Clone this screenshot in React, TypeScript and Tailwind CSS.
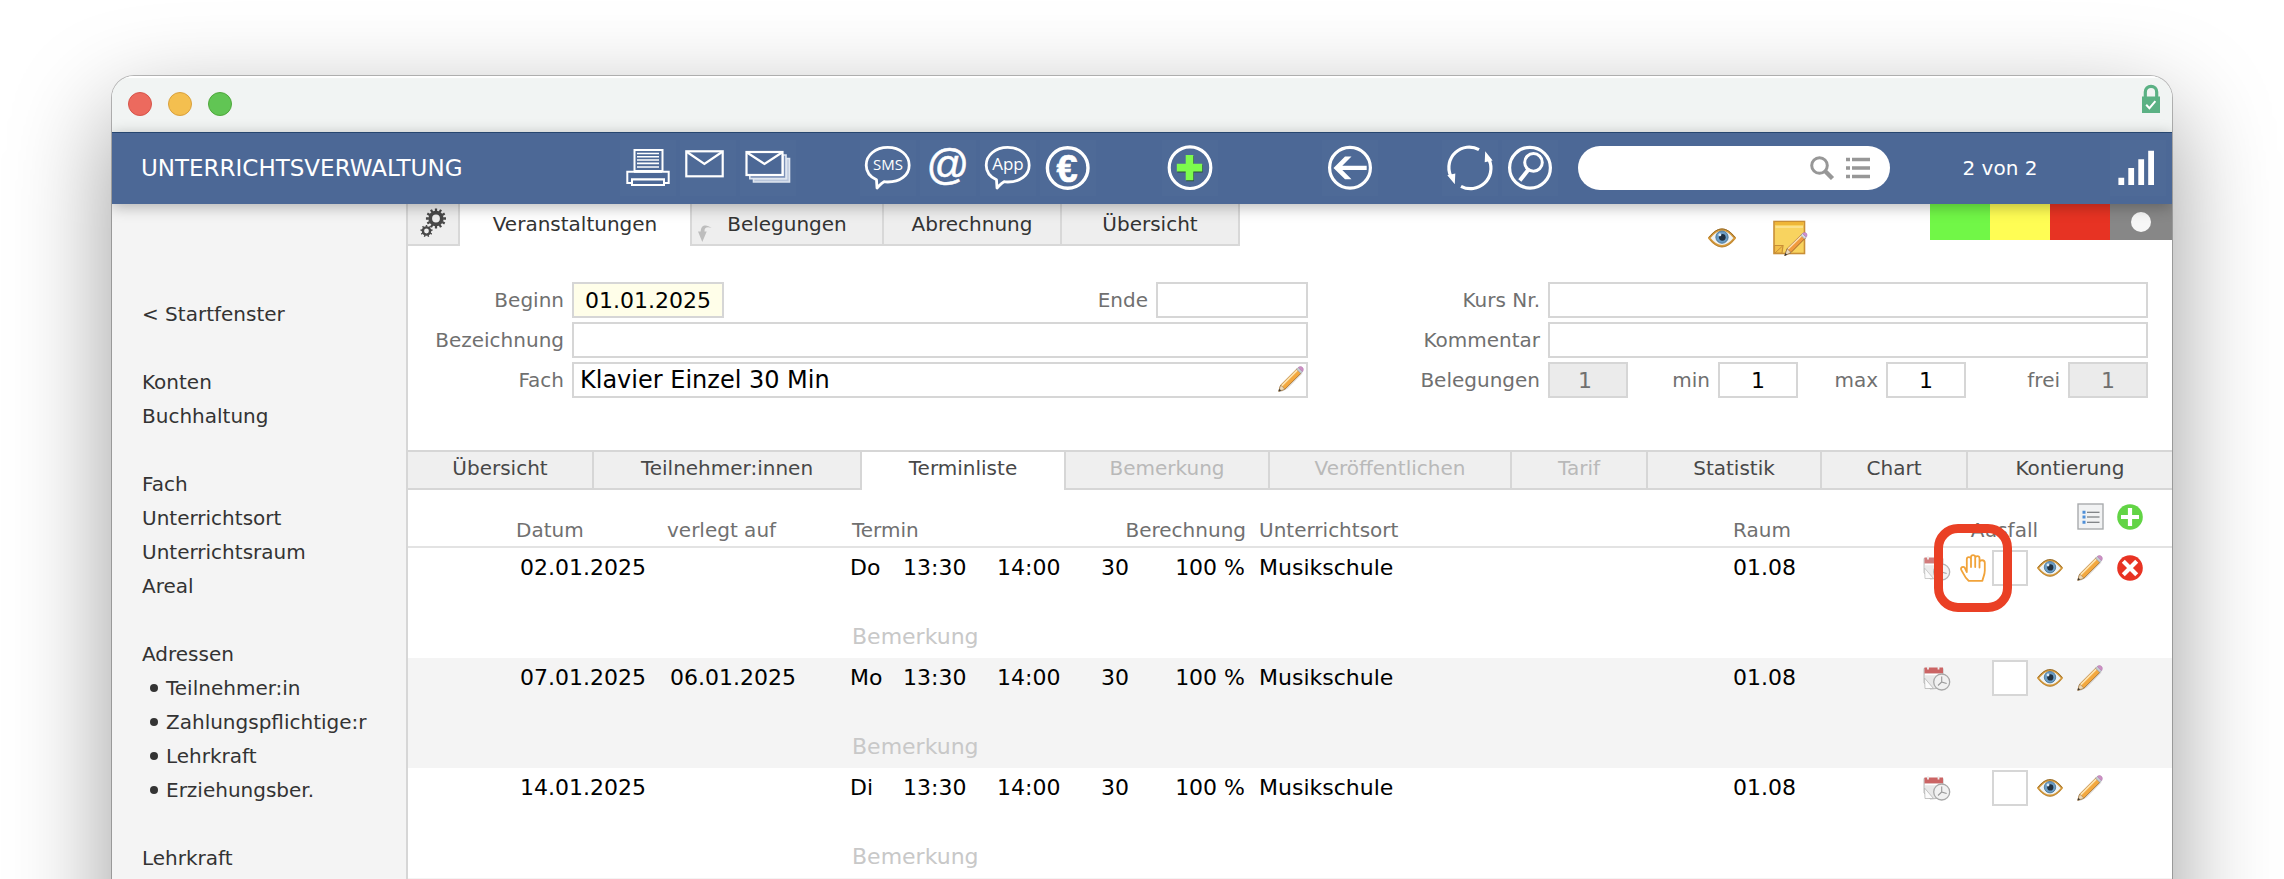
import React from "react";

type IconProps = { className?: string };

const NavIcon = ({ label, children }: { label: string; children: React.ReactNode }) => (
  <button type="button" aria-label={label} className="h-14 w-14 shrink-0 bg-white/[0.015]">
    <svg viewBox="0 0 56 56" className="h-14 w-14" fill="none" stroke="#fff" strokeWidth="2">
      {children}
    </svg>
  </button>
);

const PrinterIcon = () => (
  <NavIcon label="Drucken">
    <rect x="14.5" y="10" width="28" height="21" />
    <path d="M17 13.5h22M17 16.8h22M17 20h22M17 23.4h22M17 27h22" strokeWidth="1.6" />
    <path d="M14 31.7H7.3V43H12v-3.5h32V43h4.7V31.7H42z" fill="#4c6896" />
    <path d="M14 31.7h28" />
    <rect x="12" y="39.5" width="32" height="5.5" fill="#4c6896" />
  </NavIcon>
);

const EnvelopeIcon = () => (
  <NavIcon label="Brief">
    <rect x="6.3" y="11.3" width="36.4" height="25" strokeWidth="2.2" />
    <path d="M7 12l17.4 12L42 12" strokeWidth="2.2" />
  </NavIcon>
);

const EnvelopeStackIcon = () => (
  <NavIcon label="Serienbrief">
    <g stroke="#dfe6f0">
      <path d="M13.5 39v3h36V18.5h-3v20H13.5" fill="#b9c6dc" strokeWidth="1.6" />
      <path d="M9.8 36v2.6h36.2V15h-3v21" fill="#7d92b8" strokeWidth="1.6" />
    </g>
    <rect x="6.5" y="12" width="36" height="23" fill="#4c6896" strokeWidth="2.2" />
    <path d="M7 12.5l17.5 11.5L42 12.5" strokeWidth="2.2" />
  </NavIcon>
);

const Bubble = ({ label, text, size }: { label: string; text: string; size: number }) => (
  <NavIcon label={label}>
    <path
      d="M16.5 39.8C9.5 36.5 6.2 31 6.2 25.2C6.2 15 15.5 7.4 27.7 7.4S49.2 15 49.2 25.2S40 42 27.7 42c-1.5 0-2.6 0-3.7-.3c-3 1.5-4.8 4-7 6.3z"
      strokeWidth="2.8"
      strokeLinejoin="round"
    />
    <text
      x="28"
      y="29.5"
      textAnchor="middle"
      fill="#fff"
      stroke="none"
      fontSize={size}
      fontFamily="'Open Sans', sans-serif"
    >
      {text}
    </text>
  </NavIcon>
);

const AtIcon = () => (
  <NavIcon label="E-Mail">
    <text
      x="27.8"
      y="39"
      textAnchor="middle"
      fill="#fff"
      strokeWidth="0.6"
      fontSize="42"
      fontFamily="'Liberation Sans', sans-serif"
    >
      @
    </text>
  </NavIcon>
);

const EuroIcon = () => (
  <NavIcon label="Zahlungen">
    <circle cx="27.7" cy="28" r="20.3" strokeWidth="3.4" />
    <text
      x="27"
      y="41.5"
      textAnchor="middle"
      fill="#fff"
      strokeWidth="0.6"
      fontSize="38"
      fontWeight="700"
      fontFamily="'Liberation Sans', sans-serif"
    >
      €
    </text>
  </NavIcon>
);

const AddIcon = () => (
  <NavIcon label="Neu">
    <circle cx="28" cy="27.7" r="20.8" strokeWidth="3.2" />
    <path d="M24.2 16h7.6v8.8h8.9v7.6h-8.9v8.9h-7.6v-8.9h-8.9v-7.6h8.9z" fill="#2c4f3c" stroke="none" />
    <path d="M23.7 15h7.6v8.8h8.9v7.6h-8.9v8.9h-7.6v-8.9h-8.9v-7.6h8.9z" fill="#7dfb4d" stroke="none" />
  </NavIcon>
);

const BackIcon = () => (
  <NavIcon label="Zurück">
    <circle cx="28" cy="27.7" r="20.4" strokeWidth="3.2" />
    <path d="M11.5 27.9L23 16.5h6.5L20.3 25.8H44.7v4.3H20.3l9.2 9.2H23z" fill="#fff" stroke="none" />
  </NavIcon>
);

const RefreshIcon = () => (
  <NavIcon label="Aktualisieren">
    <path d="M37 9.6A20.4 20.4 0 0 0 8.5 35.5" strokeWidth="3.2" />
    <path d="M19 46.3A20.4 20.4 0 0 0 47.2 20" strokeWidth="3.2" />
    <path d="M43.2 11.3l7.4 9.3-7.9 1.6zM12.8 44.3L5.3 35.3l8-1.9z" fill="#fff" stroke="none" />
  </NavIcon>
);

const FindIcon = () => (
  <NavIcon label="Suchen">
    <circle cx="28" cy="27.7" r="20.4" strokeWidth="3.2" />
    <circle cx="31.5" cy="22.4" r="8.8" strokeWidth="3" />
    <path d="M26.5 29.5l-8.7 11" strokeWidth="4" />
  </NavIcon>
);

const SignalIcon = () => (
  <NavIcon label="Statistik">
    <path
      d="M8.4 37.7h5.8V45H8.4zM18.3 28h5.8v17h-5.8zM28.3 19.3h5.8V45h-5.8zM38.2 10.7H44V45h-5.8z"
      fill="#fff"
      stroke="none"
    />
  </NavIcon>
);

const EyeIcon = ({ className = "h-5 w-[26px]" }: IconProps) => (
  <svg viewBox="0 0 26 20" className={className}>
    <path d="M1 10C5 5 8.5 2.2 13 2.2S21 5 25 10c-4 5-7.500 7.600-12 7.600S5 15 1 10z" fill="#eef3f5" stroke="#d99b3a" strokeWidth="2" />
    <path d="M1 9.500C5 4.500 8.500 1.600 13 1.600s8 2.900 12 7.900" fill="none" stroke="#8b6428" strokeWidth="0.9" />
    <path d="M2 11.500c3.500 4 6.500 6.800 11 6.800s7.500-2.800 11-6.800" fill="none" stroke="#a47733" strokeWidth="0.7" />
    <circle cx="13" cy="9.2" r="5.7" fill="#6b9cc4" stroke="#44708f" strokeWidth="0.8" />
    <circle cx="13.3" cy="9.4" r="3.1" fill="#20303f" />
    <circle cx="11" cy="7" r="1.4" fill="#dcebf6" />
  </svg>
);

const PencilIcon = ({ className = "h-[26px] w-[26px]" }: IconProps) => (
  <svg viewBox="0 0 26 26" className={className}>
    <path d="M1.5 26l8-4L24 7" fill="none" stroke="#000" strokeOpacity="0.12" strokeWidth="1.5" />
    <path d="M.8 25.200L2.600 19.200 18.800 3l4.200 4.200L6.800 23.300z" fill="#f3a83f" stroke="#a8702c" strokeWidth="0.9" />
    <path d="M3.600 19.800L19.200 4.200" stroke="#fde3ae" strokeWidth="1.8" />
    <path d="M.8 25.200l1.800-6 2.200 1.700 2 2.400z" fill="#eed9b8" stroke="#8f7650" strokeWidth="0.5" />
    <path d="M.5 25.500l.9-2.700 1.800 1.800z" fill="#3d3a35" />
    <path d="M18.600 3.200l1.700-1.700 4.200 4.200-1.700 1.700z" fill="#c9ced6" stroke="#8a8f98" strokeWidth="0.5" />
    <path d="M20.300 1.500C21.500.3 23.200.2 24.400 1.300s1.300 3 .1 4.400z" fill="#cf8fc6" stroke="#a878a8" strokeWidth="0.5" />
  </svg>
);

const NoteIcon = () => (
  <svg viewBox="0 0 36 36" className="h-9 w-9">
    <rect x="2" y="1.5" width="30.5" height="32" fill="#f8d35f" stroke="#c98f36" strokeWidth="1.6" />
    <path d="M3 3.500h28.500" stroke="#efb637" strokeWidth="3" />
    <path d="M3.500 7h27.500" stroke="#fdeeb5" strokeWidth="1.2" />
    <path d="M2.500 25.500h8.500l-1 7.500H2.500z" fill="#f3c04a" stroke="#c98f36" strokeWidth="1.2" />
    <path d="M3 33l7.500-7" stroke="#c98f36" strokeWidth="1" />
    <path d="M12.800 35.500l2.300-6.800L29.500 14.500l3.700 3.700L19 32.500z" fill="#f19a3e" stroke="#96602a" strokeWidth="0.9" />
    <path d="M16 29l14-13.800" stroke="#fde0b0" strokeWidth="1.6" />
    <path d="M12.800 35.500l2.300-6.800 3.900 3.800z" fill="#ecd9bd" stroke="#7d6a4c" strokeWidth="0.5" />
    <path d="M12.500 35.800l1-2.700 1.700 1.600z" fill="#333" />
    <path d="M28.800 15.200l1.800-1.800 3.700 3.700-1.800 1.800z" fill="#d5dae2" stroke="#8c929c" strokeWidth="0.5" />
    <path d="M30.600 13.400c1.300-1.300 2.600-1.300 3.600-.3s1.200 2.600.1 4z" fill="#cf8fd4" stroke="#a67aae" strokeWidth="0.5" />
  </svg>
);

const CalendarClockIcon = ({ dim }: { dim?: boolean }) => (
  <svg viewBox="0 0 28 25" className={dim ? "h-[25px] w-7 opacity-85" : "h-[25px] w-7"}>
    <path d="M1 2.500h19V22l-13 1L1 17z" fill="#e8e8e8" stroke="#b5b5b5" strokeWidth="0.9" />
    <rect x="1.500" y="1.500" width="18.500" height="6" fill="#cb6464" />
    <path d="M5 0v3.500M15.500 0v3.500" stroke="#f0f0f0" strokeWidth="1.8" />
    <path d="M2 8.500h17.500" stroke="#fff" strokeWidth="1.5" />
    <path d="M1.500 12l9 10.500H2z" fill="#fbfbfb" stroke="#b5b5b5" strokeWidth="0.8" />
    <circle cx="18.7" cy="16" r="8" fill="#f1f1f1" stroke="#a8a8a8" strokeWidth="1.3" />
    <path d="M18.700 10.500V16l5 1.500M18.700 16l-3.700 3.500" fill="none" stroke="#9a9a9a" strokeWidth="1.1" />
  </svg>
);

const HandIcon = () => (
  <svg viewBox="0 0 26 28" className="h-7 w-[26px]" fill="none" stroke="#f1a33a" strokeWidth="1.8" strokeLinecap="round" strokeLinejoin="round">
    <path d="M6.800 18V5.300a2.100 2.100 0 0 1 4.200 0V13M11 5V3.200a2.100 2.100 0 0 1 4.200 0V13M15.200 4.200a2.100 2.100 0 0 1 4.300 0V13.500M19.500 8.200c.4-2.600 5.200-2.800 5.300.6V16.500c0 4.500-1.600 6-2.400 10.300H8.600C4.800 23.500 3.200 19.300 1.200 15.600c-.8-2.200 2-3.700 3.500-1.900L6.800 18" />
  </svg>
);

const ListIcon = () => (
  <svg viewBox="0 0 27 27" className="h-[27px] w-[27px]">
    <rect x="1" y="1" width="25" height="25" fill="#f1f2f3" stroke="#a9abad" strokeWidth="1.4" />
    <path d="M10 9.200h12.500M10 14h12.500M10 19.200h12.500" stroke="#5e6266" strokeWidth="1.1" />
    <path d="M5.500 7.700h3v3h-3zM5.500 12.600h3v3h-3zM5.500 17.700h3v3h-3z" fill="#4f8fd8" />
  </svg>
);

const PlusCircleIcon = () => (
  <svg viewBox="0 0 26 26" className="h-[26px] w-[26px]">
    <circle cx="13" cy="13" r="12.8" fill="#62d445" />
    <path d="M13 4v18M4 13h18" stroke="#fff" strokeWidth="4.2" />
  </svg>
);

const DeleteCircleIcon = () => (
  <svg viewBox="0 0 26 26" className="h-[26px] w-[26px]">
    <circle cx="13" cy="13" r="12.8" fill="#e83323" />
    <path d="M6.300 6.300l13.400 13.400M19.700 6.300L6.300 19.700" stroke="#fff" strokeWidth="4.2" />
  </svg>
);

const Gear = ({ cx, cy, r, teeth, w }: { cx: number; cy: number; r: number; teeth: number; w: number }) => (
  <g stroke="#484848" fill="none">
    <circle cx={cx} cy={cy} r={r} strokeWidth={w} />
    {Array.from({ length: teeth }, (_, i) => (
      <path
        key={i}
        d={`M${cx} ${cy - r - w / 2 + 0.5}v${-w * 0.75}`}
        strokeWidth={w * 0.6}
        transform={`rotate(${(360 / teeth) * i} ${cx} ${cy})`}
      />
    ))}
  </g>
);

const GearsIcon = () => (
  <svg viewBox="0 0 26 30" className="h-[30px] w-[26px]">
    <Gear cx={16} cy={10.5} r={5.8} teeth={12} w={3.8} />
    <Gear cx={6.5} cy={23} r={3.6} teeth={9} w={2.4} />
  </svg>
);

const CurvedArrowIcon = () => (
  <svg viewBox="0 0 14 18" className="h-[18px] w-3.5">
    <path d="M13.500 4C9 .5 3 0 2.700 7.500H0L4.300 18 8.700 7.500H6.500C6.300 3.500 9 2.500 13.500 4z" fill="#bdbdbd" />
  </svg>
);

const LockIcon = () => (
  <svg viewBox="0 0 18 29" className="h-[29px] w-[18px]">
    <path d="M3.300 14V8a5.700 5.700 0 0 1 11.400 0v6" fill="none" stroke="#5bb184" strokeWidth="3.2" />
    <path d="M0 12.500h18V29H0z" fill="#5bb184" />
    <path d="M4.200 20.800l3.200 3.400 6-7" fill="none" stroke="#fff" strokeWidth="2" />
  </svg>
);

const sidebar: { text: string; bullet?: boolean }[] = [
  { text: "< Startfenster" },
  { text: "" },
  { text: "Konten" },
  { text: "Buchhaltung" },
  { text: "" },
  { text: "Fach" },
  { text: "Unterrichtsort" },
  { text: "Unterrichtsraum" },
  { text: "Areal" },
  { text: "" },
  { text: "Adressen" },
  { text: "Teilnehmer:in", bullet: true },
  { text: "Zahlungspflichtige:r", bullet: true },
  { text: "Lehrkraft", bullet: true },
  { text: "Erziehungsber.", bullet: true },
  { text: "" },
  { text: "Lehrkraft" },
];

const subTabs = [
  { text: "Übersicht" },
  { text: "Teilnehmer:innen" },
  { text: "Terminliste", active: true },
  { text: "Bemerkung", disabled: true },
  { text: "Veröffentlichen", disabled: true },
  { text: "Tarif", disabled: true },
  { text: "Statistik" },
  { text: "Chart" },
  { text: "Kontierung" },
];

const rows = [
  { date: "02.01.2025", moved: "", day: "Do", first: true },
  { date: "07.01.2025", moved: "06.01.2025", day: "Mo" },
  { date: "14.01.2025", moved: "", day: "Di" },
];

const field = "h-9 min-w-0 border-2 border-[#d6d6d6] bg-white text-[22px] leading-8 text-black outline-none";
const label = "shrink-0 text-right text-[20px] leading-9 text-[#707070]";
const topTab = "h-[42px] border-b-2 border-r-2 border-[#d8d8d8] bg-[#eeeeee] text-center text-[#333]";

function NavBar() {
  return (
    <nav className="relative z-10 flex h-[72px] shrink-0 items-center bg-[#4c6896] pl-[29px] pr-1.5 text-white shadow-[inset_0_1px_0_#27466f,0_3px_14px_rgba(0,0,0,0.28)]">
      <h1 className="w-[479px] shrink-0 text-[23px]">UNTERRICHTSVERWALTUNG</h1>
      <div className="flex gap-1">
        <PrinterIcon />
        <EnvelopeIcon />
        <EnvelopeStackIcon />
      </div>
      <div className="ml-16 flex gap-1">
        <Bubble label="SMS" text="SMS" size={15} />
        <AtIcon />
        <Bubble label="App" text="App" size={17} />
        <EuroIcon />
      </div>
      <div className="ml-[66px] flex">
        <AddIcon />
      </div>
      <div className="ml-[104px] flex">
        <BackIcon />
      </div>
      <div className="ml-16 flex gap-1">
        <RefreshIcon />
        <FindIcon />
      </div>
      <div className="ml-5 flex h-11 w-[312px] shrink-0 items-center rounded-full bg-white pl-5 pr-5">
        <input aria-label="Suche" className="h-9 min-w-0 flex-1 bg-transparent text-[20px] text-black outline-none" />
        <svg viewBox="0 0 60 24" className="h-6 w-[60px]" fill="none" stroke="#979797">
          <circle cx="9.5" cy="9.5" r="7.8" strokeWidth="3" />
          <path d="M15 15l7.500 7.500" strokeWidth="4.4" />
          <path d="M36 3.500h4M36 12h4M36 20.500h4M42 3.500h18M42 12h18M42 20.500h18" strokeWidth="3.4" />
        </svg>
      </div>
      <span className="flex-1 text-center text-[20px]">2 von 2</span>
      <SignalIcon />
    </nav>
  );
}

function TopTabs() {
  return (
    <div className="flex h-[52px] items-start text-[20px] leading-10">
      <button type="button" aria-label="Einstellungen" className={`${topTab} flex w-[52px] shrink-0 justify-center pt-1`}>
        <GearsIcon />
      </button>
      <button type="button" className="h-10 w-[230px] shrink-0 bg-white text-center text-[#333]">
        Veranstaltungen
      </button>
      <button type="button" className={`${topTab} relative w-[194px] shrink-0 border-l-2`}>
        <span className="absolute bottom-0.5 left-1.5 leading-none">
          <CurvedArrowIcon />
        </span>
        Belegungen
      </button>
      <button type="button" className={`${topTab} w-[178px] shrink-0`}>
        Abrechnung
      </button>
      <button type="button" className={`${topTab} w-[178px] shrink-0`}>
        Übersicht
      </button>
      <div className="ml-auto mr-[122px] flex items-center gap-9 pt-4">
        <button type="button" aria-label="Ansehen">
          <EyeIcon className="h-[22px] w-7" />
        </button>
        <button type="button" aria-label="Notiz">
          <NoteIcon />
        </button>
      </div>
      <div className="flex h-9 shrink-0">
        <button type="button" aria-label="Grün" className="w-[60px] bg-[#71f747]" />
        <button type="button" aria-label="Gelb" className="w-[60px] bg-[#fffd54]" />
        <button type="button" aria-label="Rot" className="w-[60px] bg-[#e73323]" />
        <button type="button" aria-label="Ohne Farbe" className="flex w-[62px] items-center justify-center bg-[#878787]">
          <span className="h-5 w-5 rounded-full bg-[#f7f7f7]" />
        </button>
      </div>
    </div>
  );
}

function CourseForm() {
  return (
    <form className="grid grid-cols-[900fr_840fr] pr-6 pt-[26px]">
      <div className="flex flex-col gap-1">
        <div className="flex gap-2">
          <label htmlFor="beginn" className={`${label} w-[156px]`}>Beginn</label>
          <input id="beginn" defaultValue="01.01.2025" className="h-9 w-[152px] border-2 border-[#d6d6d6] bg-[#fffee9] text-center text-[22px] leading-8 text-black outline-none" />
          <label htmlFor="ende" className={`${label} flex-1`}>Ende</label>
          <input id="ende" className={`${field} w-[152px]`} />
        </div>
        <div className="flex gap-2">
          <label htmlFor="bezeichnung" className={`${label} w-[156px]`}>Bezeichnung</label>
          <input id="bezeichnung" className={`${field} flex-1 px-1.5`} />
        </div>
        <div className="flex gap-2">
          <label htmlFor="fach" className={`${label} w-[156px]`}>Fach</label>
          <div className="relative flex flex-1">
            <input id="fach" defaultValue="Klavier Einzel 30 Min" className="h-9 min-w-0 flex-1 border-2 border-[#d6d6d6] bg-white px-1.5 text-[24px] leading-8 text-black outline-none" />
            <button type="button" aria-label="Fach bearbeiten" className="absolute right-1 top-1">
              <PencilIcon />
            </button>
          </div>
        </div>
      </div>
      <div className="flex flex-col gap-1">
        <div className="flex gap-2">
          <label htmlFor="kursnr" className={`${label} w-[232px]`}>Kurs Nr.</label>
          <input id="kursnr" className={`${field} flex-1 px-1.5`} />
        </div>
        <div className="flex gap-2">
          <label htmlFor="kommentar" className={`${label} w-[232px]`}>Kommentar</label>
          <input id="kommentar" className={`${field} flex-1 px-1.5`} />
        </div>
        <div className="flex gap-2">
          <label htmlFor="belegungen" className={`${label} w-[232px]`}>Belegungen</label>
          <input id="belegungen" readOnly defaultValue="1" className="h-9 w-20 border-2 border-[#d6d6d6] bg-[#ebebeb] pr-1.5 text-center text-[22px] leading-8 text-[#707070] outline-none" />
          <label htmlFor="min" className={`${label} w-[74px]`}>min</label>
          <input id="min" defaultValue="1" className={`${field} w-20 text-center`} />
          <label htmlFor="max" className={`${label} w-[72px]`}>max</label>
          <input id="max" defaultValue="1" className={`${field} w-20 text-center`} />
          <label htmlFor="frei" className={`${label} flex-1`}>frei</label>
          <input id="frei" readOnly defaultValue="1" className="h-9 w-20 border-2 border-[#d6d6d6] bg-[#ebebeb] text-center text-[22px] leading-8 text-[#707070] outline-none" />
        </div>
      </div>
    </form>
  );
}

function SubTabs() {
  return (
    <div className="mt-[52px] grid grid-cols-[186fr_268fr_204fr_204fr_242fr_136fr_174fr_146fr_204fr] border-t-2 border-[#d6d6d6] text-[20px] leading-8">
      {subTabs.map((t, i) => (
        <button
          key={t.text}
          type="button"
          disabled={t.disabled}
          className={[
            "h-[38px] border-[#d6d6d6] text-center",
            i < subTabs.length - 1 ? "border-r-2" : "",
            t.active ? "bg-white pb-1.5" : "border-b-2 bg-[#efefef] pb-1",
            t.disabled ? "text-[#b9b9b9]" : "text-[#484848]",
          ].join(" ")}
        >
          {t.text}
        </button>
      ))}
    </div>
  );
}

const slots = "grid grid-cols-[38px_34px_40px_40px_40px_40px] items-center justify-items-center";

function DateTable() {
  const th = "h-[58px] border-b-2 border-[#e3e3e3] pb-1 align-bottom font-normal leading-6";
  return (
    <table className="w-full table-fixed border-separate border-spacing-0 text-left text-[22px] leading-7 text-black">
      <colgroup>
        <col className="w-[259px]" />
        <col className="w-[183px]" />
        <col className="w-[53px]" />
        <col className="w-[94px]" />
        <col className="w-[104px]" />
        <col className="w-[60px]" />
        <col className="w-[87px]" />
        <col />
        <col className="w-[185px]" />
        <col className="w-[254px]" />
      </colgroup>
      <thead className="text-[20px] text-[#707070]">
        <tr>
          <th className={`${th} pl-[108px]`}>Datum</th>
          <th className={th}>verlegt auf</th>
          <th className={`${th} pl-0.5`} colSpan={3}>Termin</th>
          <th className={`${th} pr-0.5 text-right`} colSpan={2}>Berechnung</th>
          <th className={`${th} pl-[11px]`}>Unterrichtsort</th>
          <th className={th}>Raum</th>
          <th className={th}>
            <div className="flex items-end justify-end pr-[22px]">
              <span className="mr-8">Ausfall</span>
              <button type="button" aria-label="Liste" className="flex w-10 justify-center pb-3">
                <ListIcon />
              </button>
              <button type="button" aria-label="Termin hinzufügen" className="flex w-10 justify-center pb-3">
                <PlusCircleIcon />
              </button>
            </div>
          </th>
        </tr>
      </thead>
      {rows.map((r) => (
        <tbody key={r.date} className="bg-[#f4f4f4] first-of-type:bg-white last-of-type:bg-white">
          <tr className="h-10">
            <td className="pl-[112px]">{r.date}</td>
            <td className="pl-[3px]">{r.moved}</td>
            <td>{r.day}</td>
            <td>13:30</td>
            <td>14:00</td>
            <td>30</td>
            <td className="pr-[3px] text-right">100 %</td>
            <td className="pl-[11px]">Musikschule</td>
            <td>01.08</td>
            <td>
              <div className={`${slots} h-10`}>
                <button type="button" aria-label="Termin verlegen">
                  <CalendarClockIcon dim={r.first} />
                </button>
                {r.first ? (
                  <button type="button" aria-label="Anmelden" className="relative">
                    <HandIcon />
                    <span className="absolute left-1/2 top-1/2 h-[88px] w-[78px] -translate-x-1/2 -translate-y-1/2 rounded-[24px] border-9 border-[#ea4025]" />
                  </button>
                ) : (
                  <span />
                )}
                <input
                  type="checkbox"
                  aria-label={`Ausfall ${r.date}`}
                  className="h-9 w-9 appearance-none border-2 border-[#d6d6d6] bg-white"
                />
                <button type="button" aria-label="Ansehen">
                  <EyeIcon />
                </button>
                <button type="button" aria-label="Bearbeiten">
                  <PencilIcon />
                </button>
                {r.first && (
                  <button type="button" aria-label="Löschen">
                    <DeleteCircleIcon />
                  </button>
                )}
              </div>
            </td>
          </tr>
          <tr className="h-[70px]">
            <td colSpan={2} />
            <td colSpan={8} className="pb-[7px] pl-0.5 align-bottom">
              <input
                aria-label={`Bemerkung ${r.date}`}
                placeholder="Bemerkung"
                className="block h-7 w-full bg-transparent outline-none placeholder:text-[#c8c8c8]"
              />
            </td>
          </tr>
        </tbody>
      ))}
    </table>
  );
}

export default function App() {
  return (
    <div className="flex h-screen flex-col overflow-hidden bg-white font-['DejaVu_Sans',sans-serif]">
      <div className="mx-28 -mb-40 mt-[76px] flex flex-1 flex-col overflow-hidden rounded-[22px] bg-white shadow-[0_0_0_1px_rgba(0,0,0,0.25),0_36px_100px_rgba(0,0,0,0.4)]">
        <header className="flex h-14 shrink-0 items-center gap-4 bg-[#f1f4f3] pl-4 pr-3 shadow-[inset_0_2px_1px_#fff]">
          <button type="button" aria-label="Schließen" className="h-6 w-6 rounded-full border border-[#d6544a] bg-[#ec6a5e]" />
          <button type="button" aria-label="Minimieren" className="h-6 w-6 rounded-full border border-[#d9a03d] bg-[#f4bf4f]" />
          <button type="button" aria-label="Maximieren" className="h-6 w-6 rounded-full border border-[#4fa73c] bg-[#61c554]" />
          <span className="ml-auto -mt-3">
            <LockIcon />
          </span>
        </header>
        <NavBar />
        <div className="flex flex-1">
          <aside className="w-[296px] shrink-0 border-r-2 border-[#d6d6d6] bg-[#f4f4f4] pl-[30px] pt-[93px]">
            <ul className="text-[20px] leading-[34px] text-[#333]">
              {sidebar.map((item, i) => (
                <li key={i} className="h-[34px] whitespace-nowrap">
                  {item.text && (
                    <a href="#" className={item.bullet ? "flex items-center gap-2 pl-2" : ""}>
                      {item.bullet && <span className="h-2 w-2 rounded-full bg-[#333]" />}
                      {item.text}
                    </a>
                  )}
                </li>
              ))}
            </ul>
          </aside>
          <main className="flex min-w-0 flex-1 flex-col bg-white">
            <TopTabs />
            <CourseForm />
            <SubTabs />
            <DateTable />
            <div className="flex-1 bg-[#f4f4f4]" />
          </main>
        </div>
      </div>
    </div>
  );
}
